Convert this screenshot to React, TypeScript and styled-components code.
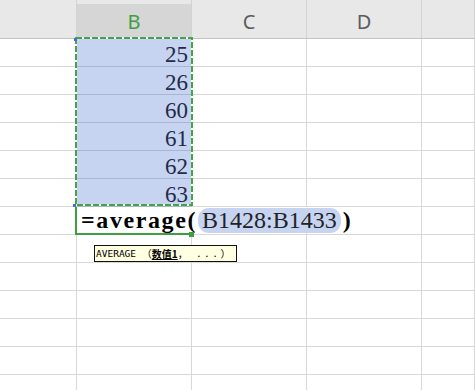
import React from "react";
import styled, { createGlobalStyle } from "styled-components";

const GlobalStyle = createGlobalStyle`
  html, body {
    margin: 0;
    padding: 0;
    background: #fff;
  }
  body {
    font-family: "Liberation Sans", Arial, sans-serif;
  }
`;

const COLUMNS = ["", "B", "C", "D", ""];
const ACTIVE_COLUMN = 1;
const VALUES = [25, 26, 60, 61, 62, 63];
const FORMULA_ROW = VALUES.length;
const ROW_COUNT = 13;

const SERIF = `"Liberation Serif", "Times New Roman", serif`;
const MONO = `"DejaVu Sans Mono", monospace`;
const CJK = `"Noto Sans CJK SC", sans-serif`;
const GREEN = "#3f9f3f";
const RANGE_BLUE = "#c6d4f1";

const Sheet = styled.div`
  position: relative;
  width: 475px;
  height: 390px;
  overflow: hidden;
  background: #fff;
`;

const Grid = styled.div`
  display: grid;
  grid-template-columns: 77px 115px 115px 115px 1fr;
  grid-template-rows: 39px;
  grid-auto-rows: 28px;
`;

const HeaderCell = styled.div<{ $active?: boolean }>`
  box-sizing: border-box;
  display: flex;
  align-items: center;
  justify-content: center;
  padding-top: 4px;
  border-right: 1px solid #d2d2d2;
  border-bottom: 1px solid #c2c2c2;
  background: ${(p) => (p.$active ? "linear-gradient(#e8e8e8 0 4px, #d6d6d6 4px)" : "#e8e8e8")};
  color: ${(p) => (p.$active ? GREEN : "#5c5c5c")};
  font-family: "Noto Sans", "Liberation Sans", sans-serif;
  font-size: 20px;
`;

const Cell = styled.div`
  box-sizing: border-box;
  border-right: 1px solid #d8d8d8;
  border-bottom: 1px solid #d8d8d8;
  background: #fff;
`;

/* the copied range: one block over six rows of column B */
const SelectionBlock = styled.div`
  position: relative;
  grid-column: 2;
  grid-row: 2 / span 6;
  display: flex;
  flex-direction: column;
  background: ${RANGE_BLUE};
`;

const ValueCell = styled.div`
  box-sizing: border-box;
  flex: 1;
  display: flex;
  align-items: flex-end;
  justify-content: flex-end;
  padding-right: 4px;
  border-bottom: 1px solid #a9b5d3;
  font-family: ${SERIF};
  font-size: 23px;
  line-height: 23px;
  color: #252a48;
`;

const Marquee = styled.svg`
  position: absolute;
  left: -2px;
  top: -2px;
  width: 118px;
  height: 169px;
  overflow: visible;
  pointer-events: none;
`;

/* the cell being edited; the editor runs on over C and D */
const ActiveCell = styled(Cell)`
  position: relative;
  z-index: 1;
  display: flex;
  align-items: flex-start;
  border-bottom-color: ${GREEN};
  box-shadow: -2px 0 0 0 ${GREEN}, inset 0 -1px 0 0 ${GREEN};

  &::after {
    content: "";
    position: absolute;
    right: -3px;
    bottom: -3px;
    width: 5px;
    height: 5px;
    background: ${GREEN};
  }
`;

const Editor = styled.div`
  flex: none;
  box-sizing: border-box;
  display: flex;
  align-items: center;
  width: 344px;
  height: 26px;
  padding-left: 4px;
  background: #fff;
  font-family: ${SERIF};
  font-size: 24px;
  color: #000;
  white-space: nowrap;
`;

const FunctionName = styled.span`
  font-weight: bold;
  letter-spacing: 1.6px;
`;

const RangeRef = styled.span`
  display: inline-flex;
  align-items: center;
  height: 25px;
  margin: 0 2px 0 1px;
  padding: 0 4px;
  border-radius: 11px;
  background: ${RANGE_BLUE};
  color: #222;
`;

const CloseParen = styled.span`
  font-weight: bold;
`;

const Tooltip = styled.div`
  position: absolute;
  left: 94px;
  top: 245px;
  z-index: 4;
  display: flex;
  align-items: center;
  height: 17px;
  box-sizing: border-box;
  padding: 0 5px 0 1px;
  border: 1px solid #111;
  background: #ffffe1;
  font-family: ${MONO};
  font-size: 9.5px;
  line-height: 15px;
  color: #000;
  white-space: pre;
`;

const Wide = styled.span<{ $bold?: boolean }>`
  font-family: ${CJK};
  font-size: 10px;
  font-weight: ${(p) => (p.$bold ? "bold" : "normal")};
  text-decoration: ${(p) => (p.$bold ? "underline" : "none")};
`;

const Dots = styled.span`
  letter-spacing: 2.5px;
`;

export default function App() {
  const rows = Array.from({ length: ROW_COUNT }, (_, r) => r);

  return (
    <>
      <GlobalStyle />
      <Sheet>
        <Grid>
          {COLUMNS.map((name, c) => (
            <HeaderCell key={`h${c}`} $active={c === ACTIVE_COLUMN}>
              {name}
            </HeaderCell>
          ))}

          <SelectionBlock>
            {VALUES.map((v) => (
              <ValueCell key={v}>{v}</ValueCell>
            ))}
            <Marquee viewBox="0 0 118 169">
              <rect x="1" y="1" width="116" height="167" fill="none" stroke="#fff" strokeWidth="2" />
              <rect x="1" y="1" width="116" height="167" fill="none" stroke="#43a543" strokeWidth="2" strokeDasharray="6 2" />
              <rect x="-1" y="1" width="3" height="3" fill="#4a6fd0" />
              <rect x="-2" y="167" width="3" height="3" fill="#4a6fd0" />
            </Marquee>
          </SelectionBlock>

          {rows.map((r) =>
            COLUMNS.map((_, c) => {
              if (c === ACTIVE_COLUMN && r < VALUES.length) return null;
              if (c === ACTIVE_COLUMN && r === FORMULA_ROW) {
                return (
                  <ActiveCell key={`${r}-${c}`}>
                    <Editor>
                      <FunctionName>=average(</FunctionName>
                      <RangeRef>B1428:B1433</RangeRef>
                      <CloseParen>)</CloseParen>
                    </Editor>
                  </ActiveCell>
                );
              }
              return <Cell key={`${r}-${c}`} style={{ gridRow: r + 2, gridColumn: c + 1 }} />;
            })
          )}
        </Grid>

        <Tooltip>
          {"AVERAGE "}
          <Wide>（</Wide>
          <Wide $bold>数值1</Wide>
          <Wide>，</Wide>
          <Dots> ...</Dots>
          <Wide>）</Wide>
        </Tooltip>
      </Sheet>
    </>
  );
}
